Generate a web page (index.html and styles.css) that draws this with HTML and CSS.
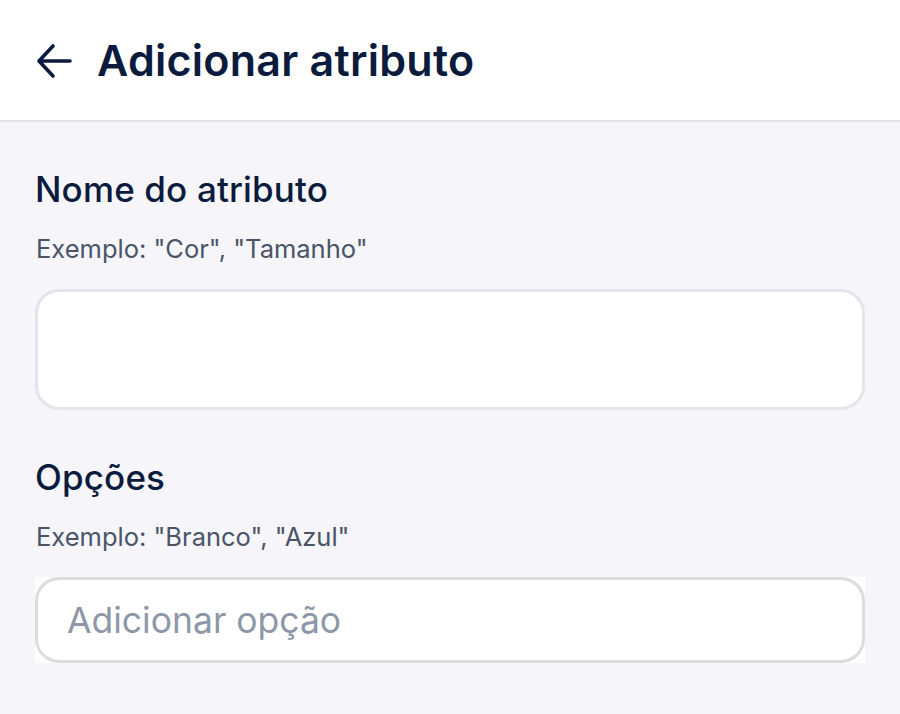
FILE: index.html
```html
<!doctype html>
<html>
<head>
	<title>Adicionar atributo</title>
	<meta charset="utf-8">
	<link rel="stylesheet" href="styles.css">
</head>
<body>

	<div class="top">
		<a class="back" href="#">
			<svg width="36" height="36" viewBox="0 0 36 36">
				<path d="M34 18 H3 M17 3 L3 18 L17 33" fill="none" stroke="#0b1b3d" stroke-width="3.6" stroke-linecap="round" stroke-linejoin="round"/>
			</svg>
		</a>
		<h1>Adicionar atributo</h1>
	</div>

	<div class="form">
		<div class="field">
			<label>Nome do atributo</label>
			<p class="hint">Exemplo: "Cor", "Tamanho"</p>
			<input type="text" class="box tall">
		</div>

		<div class="field">
			<label>Opções</label>
			<p class="hint">Exemplo: "Branco", "Azul"</p>
			<div class="wrap">
				<input type="text" class="box" placeholder="Adicionar opção">
			</div>
		</div>
	</div>

</body>
</html>
```

FILE: styles.css
```css
* {
	box-sizing: border-box;
	font-family: Inter, "Noto Sans", sans-serif;
}
body {
	margin: 0;
	background: #f5f5fa;
	color: #0b1b3d;
}
.top {
	display: flex;
	align-items: center;
	gap: 25px;
	height: 122px;
	padding: 0 36px;
	background: #fff;
	border-bottom: 2px solid #e2e2e7;
}
.back {
	display: flex;
	margin-top: 2px;
}
h1 {
	margin: 0;
	font-size: 43px;
	font-weight: 600;
	letter-spacing: 0.25px;
}
.form {
	padding: 47px 35px 0;
}
.field {
	margin-bottom: 47px;
}
label {
	display: block;
	font-size: 35px;
	font-weight: 500;
	line-height: 40px;
	letter-spacing: 0.15px;
}
.hint {
	margin: 25px 0 25px 1px;
	font-size: 25.5px;
	line-height: 30px;
	color: #4a5467;
}
.box {
	display: block;
	width: 100%;
	height: 86px;
	padding: 0 29px;
	border: 3px solid #dcdce0;
	border-radius: 24px;
	background: #fff;
	outline: none;
	font-size: 35.5px;
	color: #0b1b3d;
}
.box.tall {
	height: 121px;
	border-color: #e4e4ea;
}
.box::placeholder {
	color: #8e97a7;
}
.wrap {
	background: #fff;
}
```
